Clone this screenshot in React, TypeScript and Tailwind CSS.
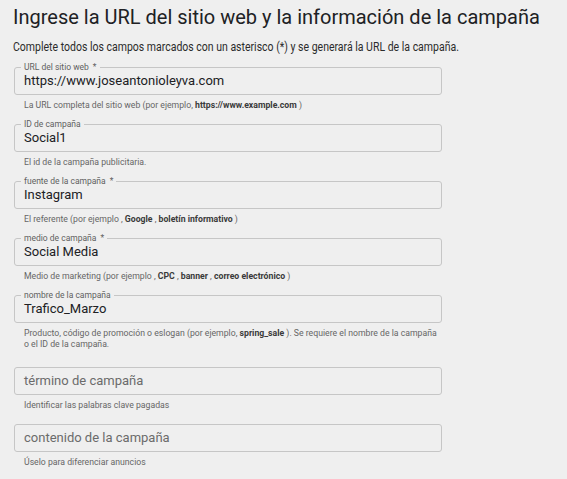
import type { ReactNode } from "react";

interface Field {
  label?: string;
  required?: boolean;
  value?: string;
  placeholder?: string;
  help: ReactNode;
  gap?: string;
}

const B = ({ children }: { children: ReactNode }) => (
  <b className="font-bold text-[#3a3a3a]">{children}</b>
);

const fields: Field[] = [
  {
    label: "URL del sitio web",
    required: true,
    value: "https://www.joseantonioleyva.com",
    help: (
      <>
        La URL completa del sitio web (por ejemplo, <B>https://www.example.com</B> )
      </>
    ),
  },
  {
    label: "ID de campaña",
    value: "Social1",
    help: <>El id de la campaña publicitaria.</>,
  },
  {
    label: "fuente de la campaña",
    required: true,
    value: "Instagram",
    help: (
      <>
        El referente (por ejemplo , <B>Google</B> , <B>boletín informativo</B> )
      </>
    ),
  },
  {
    label: "medio de campaña",
    required: true,
    value: "Social Media",
    help: (
      <>
        Medio de marketing (por ejemplo , <B>CPC</B> , <B>banner</B> ,{" "}
        <B>correo electrónico</B> )
      </>
    ),
  },
  {
    label: "nombre de la campaña",
    value: "Trafico_Marzo",
    gap: "mb-[17px]",
    help: (
      <>
        Producto, código de promoción o eslogan (por ejemplo, <B>spring_sale</B> ). Se
        requiere el nombre de la campaña
        <br />o el ID de la campaña.
      </>
    ),
  },
  {
    placeholder: "término de campaña",
    help: <>Identificar las palabras clave pagadas</>,
  },
  {
    placeholder: "contenido de la campaña",
    help: <>Úselo para diferenciar anuncios</>,
  },
];

function OutlinedField({ field }: { field: Field }) {
  return (
    <div className={field.gap ?? "mb-[13px]"}>
      <div className="relative ml-[14px] flex h-[28px] w-[428px] items-center rounded-[3px] border border-[#c6c6c6] pl-[9px]">
        {field.label && (
          <span className="absolute -top-[6px] left-[6px] bg-[#efefef] px-[3px] text-[8.5px] leading-[10px] text-[#5f5f5f]">
            {field.label}
            {field.required && <span className="ml-[4px]">*</span>}
          </span>
        )}
        {field.value ? (
          <span className="text-[13px] leading-[16px] text-[#202124]">{field.value}</span>
        ) : (
          <span className="text-[13px] leading-[16px] text-[#6b6b6b]">{field.placeholder}</span>
        )}
      </div>
      <p className="mt-[5px] pl-[24px] text-[8.7px] leading-[11px] text-[#666]">{field.help}</p>
    </div>
  );
}

export default function App() {
  return (
    <div
      className="h-[479px] w-full overflow-hidden bg-[#efefef] pt-[5px]"
      style={{ fontFamily: "Roboto, 'Noto Sans', sans-serif" }}
    >
      <h1 className="pl-[13px] text-[20px] leading-[24px] font-normal text-[#202124]">
        Ingrese la URL del sitio web y la información de la campaña
      </h1>
      <div className="mt-[10px] pl-[13px]">
        <p className="w-max origin-left scale-x-[0.84] text-[12.5px] leading-[16px] whitespace-nowrap text-[#2b2b2b]">
          Complete todos los campos marcados con un asterisco (*) y se generará la URL de la campaña.
        </p>
      </div>
      <div className="mt-[12px]">
        {fields.map((f, i) => (
          <OutlinedField key={i} field={f} />
        ))}
      </div>
    </div>
  );
}
